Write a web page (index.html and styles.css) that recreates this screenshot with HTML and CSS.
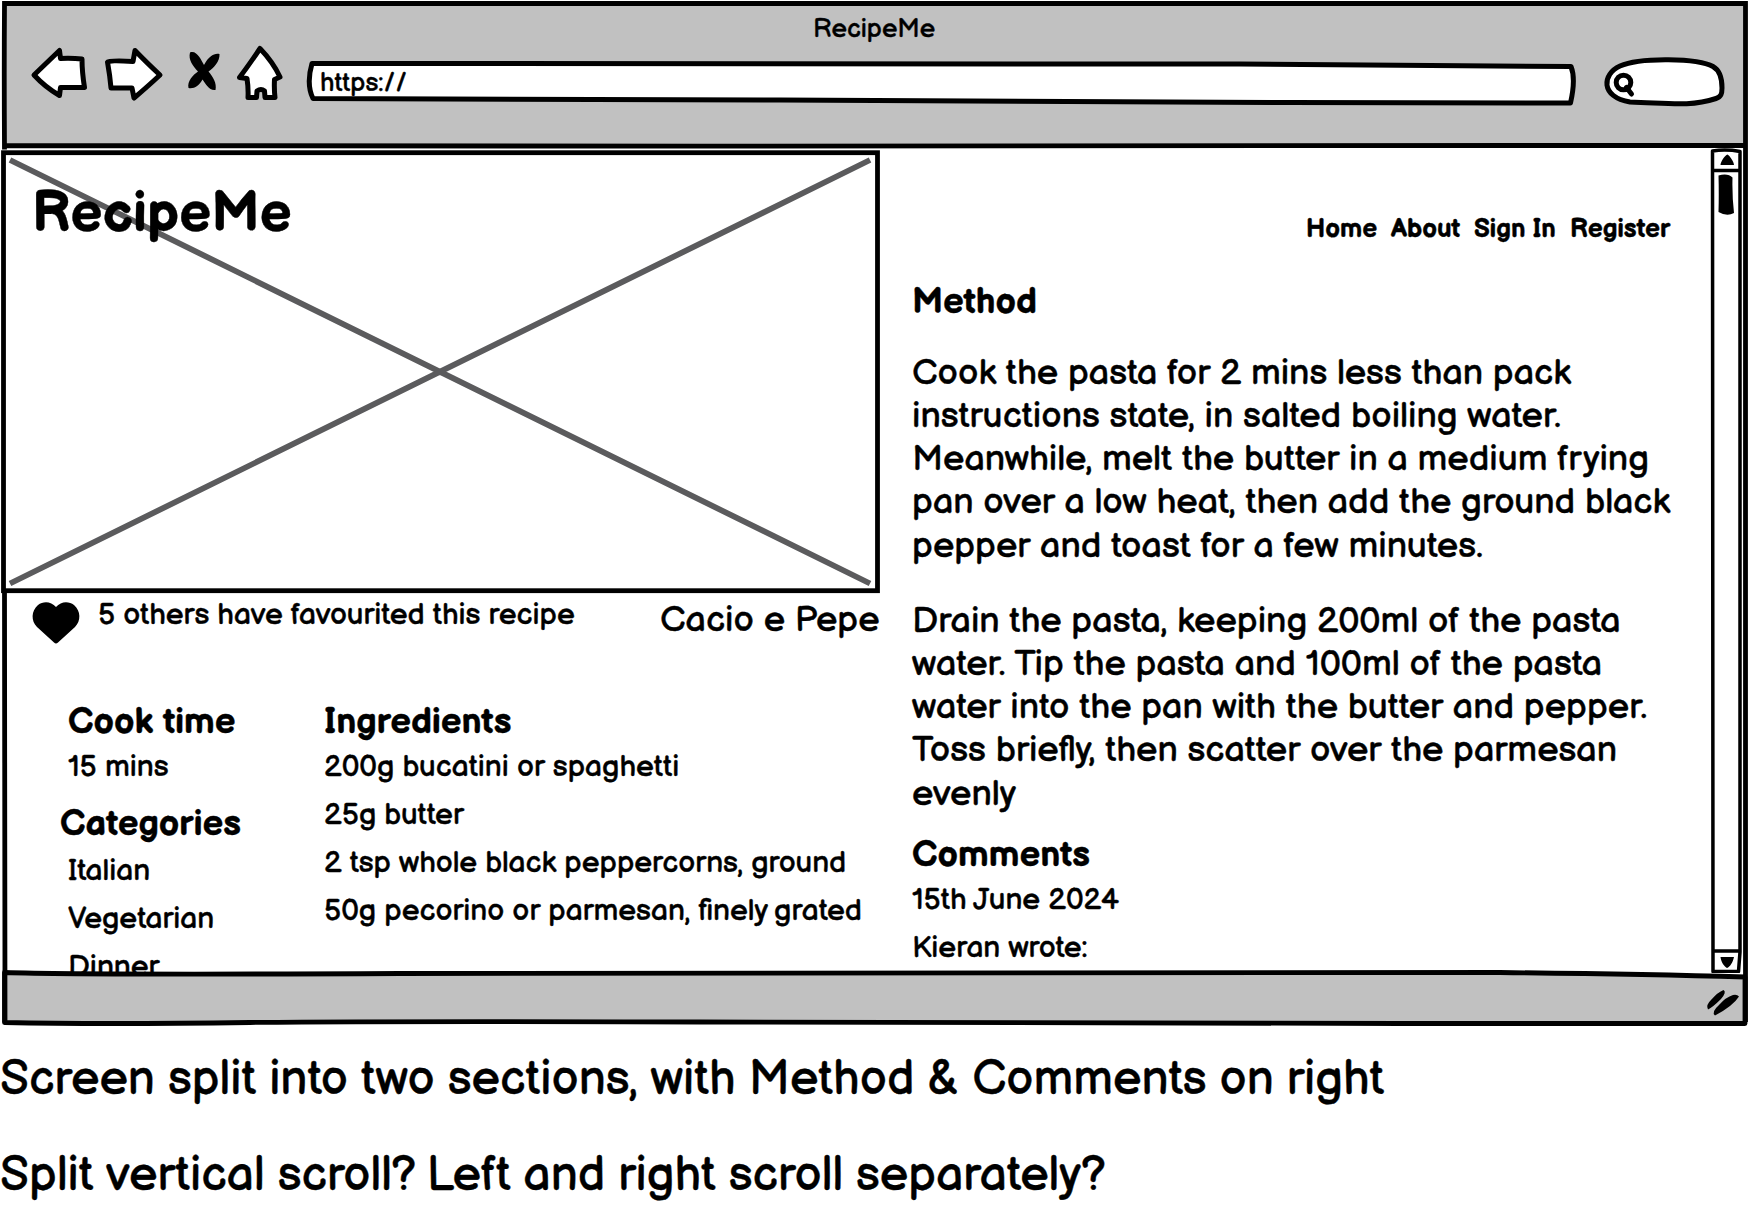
FILE: index.html
```html
<!DOCTYPE html>
<html lang="en">
<head>
<meta charset="utf-8">
<title>RecipeMe</title>
<link rel="stylesheet" href="styles.css">
</head>
<body>
<div class="browser">
  <header class="chrome">
    <div class="window-title">RecipeMe</div>
    <div class="toolbar">
      <svg class="icon back" viewBox="30 44 58 60"><path d="M34 75 59.500 50.500 60.500 58.500Q72 58 82 59Q82 72 84.500 87.500L60.500 87.500 59.500 95.500Q45 87 34 75Z"/></svg>
      <svg class="icon forward" viewBox="106 44 60 60"><path d="M108.500 62Q109.500 60 134 61.500L136 50.500Q147 62 161 75Q147 88 135 98L133 88 112 88Q111 76 108.500 62Z"/></svg>
      <svg class="icon stop" viewBox="186 44 36 60"><path class="solid" d="M190 52.500C197 50 201 60 204 65C209 56 214 53 219.500 54C220 61 214 68 208.500 71.500C213 77 217 83 215.500 90C209 91 206 84 202.500 79.500C199 86 194 89 188.500 88C187 81 193 75 198 71.500C193 66 188 60 190 52.500Z"/></svg>
      <svg class="icon home" viewBox="235 44 50 60"><path d="M260 48.500Q273 62 280 77L274.500 79.500Q274 89 275 97.500L265 97.500 264.500 91Q261 88 257 91L256.500 97.500 248 97.500Q248.500 88 247 78.500L239.500 77.500Q249 65 260 48.500Z"/></svg>
      <div class="address">
        <svg class="icon" viewBox="306 44 1270 60"><path d="M312 63.500L1240 64 1571 66.500Q1576 79 1570.500 103L1290 102.500 780 100 313 98.500Q306 84 312 63.500Z"/></svg>
        <span class="address-text">https://</span>
      </div>
      <svg class="icon search" viewBox="1602 44 124 64"><path d="M1630 102C1600 97 1602 74 1620 66C1640 57 1698 58 1713 66.500C1721 71 1722 80 1722 88C1722 94 1721 97 1716 98.500C1690 107 1668 103 1630 102Z"/><circle cx="1623.500" cy="82.500" r="7.300"/><path d="M1626.500 87.500 1631.500 94"/></svg>
    </div>
  </header>

  <main class="page">
    <section class="left">
      <div class="hero">
        <svg class="cross" viewBox="0 0 879 442"><rect x="2.500" y="1.700" width="874" height="438"/><path class="diag" d="M9 9 869 432.500M869 9 9 432.500"/></svg>
        <h1 class="logo">RecipeMe</h1>
      </div>
      <div class="meta">
        <svg class="heart" viewBox="0 0 48 42"><path d="M24 5C29-1 37-1 42 3C49 9 49 19 43 25L26 40.500Q24 42.500 22 40.500L5 25C-1 19-1 9 6 3C11-1 19-1 24 5Z"/></svg>
        <span class="favourites">5 others have favourited this recipe</span>
        <h2 class="dish">Cacio e Pepe</h2>
      </div>
      <div class="details">
        <div class="facts">
          <h3>Cook time</h3>
          <p>15 mins</p>
          <h3 class="categories">Categories</h3>
          <ul>
            <li>Italian</li>
            <li>Vegetarian</li>
            <li>Dinner</li>
          </ul>
        </div>
        <div class="ingredients">
          <h3>Ingredients</h3>
          <ul>
            <li>200g bucatini or spaghetti</li>
            <li>25g butter</li>
            <li>2 tsp whole black peppercorns, ground</li>
            <li>50g pecorino or parmesan, finely grated</li>
          </ul>
        </div>
      </div>
    </section>

    <section class="right">
      <nav>
        <a class="n-home">Home</a><a class="n-about">About</a><a class="n-sign">Sign In</a><a>Register</a>
      </nav>
      <h3 class="method-title">Method</h3>
      <div class="method">
        <p>Cook the pasta for 2 mins less than pack<br>instructions state, in salted boiling water.<br>Meanwhile, melt the butter in a medium frying<br>pan over a low heat, then add the ground black<br>pepper and toast for a few minutes.</p>
        <p>Drain the pasta, keeping 200ml of the pasta<br>water. Tip the pasta and 100ml of the pasta<br>water into the pan with the butter and pepper.<br>Toss briefly, then scatter over the parmesan<br>evenly</p>
      </div>
      <h3 class="comments-title">Comments</h3>
      <div class="comment">
        <p>15th June 2024</p>
        <p>Kieran wrote:</p>
      </div>
    </section>

    <svg class="scrollbar" viewBox="1709 147 34 828"><path d="M1712.500 151Q1726 149 1740 151.500Q1739 600 1740 952L1738.500 971.500 1713 971.500Q1712 500 1712.500 151ZM1712.500 170.500H1740M1712.500 951H1739"/><path class="solid" d="M1727.500 154.500C1730 156 1734 162 1734 165H1720.500C1720.500 162 1725 155 1727.500 154.500ZM1720.500 957H1734C1733 962 1730 967 1727 968C1724 966 1721 962 1720.500 957ZM1718.500 175.500Q1728 173 1732.500 177.500Q1732 196 1734 213Q1727 217 1718.500 212Q1719 194 1718.500 175.500Z"/></svg>
  </main>

  <svg class="status" viewBox="0 968 1750 62"><path class="bar" d="M4.500 972.500Q80 975 400 973.500L1500 972.500Q1640 974 1745 977L1745 1023.500 1400 1023.500 700 1022Q400 1021 250 1022.500Q100 1024.500 4.500 1022.500Z"/><path class="solid" d="M1723.500 990Q1727 992 1721 999Q1713 1007 1708 1009.500Q1705.500 1005 1711 1000Q1718 992 1723.500 990ZM1733 995Q1737 994 1739 996.500Q1733 1006 1715 1015.500Q1711 1012 1719 1005Q1726 997 1733 995Z"/></svg>

  <svg class="frame" viewBox="0 0 1750 1030"><path d="M4.500 149.500Q4 70 4.500 3.500H1745.500V1022M4.500 593Q4 760 5 1022M4.500 145.500 700 146.200 1745 145.300"/></svg>
</div>

<div class="notes">
  <p>Screen split into two sections, with Method &amp; Comments on right</p>
  <p>Split vertical scroll? Left and right scroll separately?</p>
</div>
</body>
</html>
```

FILE: styles.css
```css
* { box-sizing: border-box; margin: 0; padding: 0; }

body {
  width: 1750px;
  height: 1208px;
  overflow: hidden;
  background: #fff;
  color: #000;
  font-family: "Balsamiq Sans", Inter, sans-serif;
  font-feature-settings: "cv11", "cv08";
  -webkit-text-stroke: 0.4px #000;
  white-space: nowrap;
}

ul { list-style: none; }
svg { display: block; overflow: visible; }

.browser { position: relative; height: 1028px; }

.frame { position: absolute; inset: 0; width: 1750px; height: 1030px; fill: none; stroke: #000; stroke-width: 4.8; pointer-events: none; }

/* Browser chrome */
.chrome { height: 147px; margin: 0 4px; padding-top: 13px; background: linear-gradient(#fff 2px, #c1c1c1 2px, #c1c1c1 146px, #fff 146px); }
.window-title { height: 31px; line-height: 34px; font-size: 26px; padding-left: 809px; }

.toolbar { display: flex; height: 60px; padding-left: 26px; }
.icon { height: 60px; fill: #fff; stroke: #000; stroke-width: 5; stroke-linejoin: round; stroke-linecap: round; }
.solid { fill: #000; stroke: none; }
.back { width: 58px; margin-right: 17px; }
.forward { width: 60px; margin-right: 21px; }
.stop { width: 36px; margin-right: 13px; }
.home { width: 50px; margin-right: 21px; }
.address { display: grid; width: 1270px; margin-right: 26px; }
.address > * { grid-area: 1 / 1; }
.address .icon { width: 1270px; }
.address-text { height: 60px; padding-left: 14px; font-size: 26px; line-height: 79px; }
.search { width: 124px; height: 64px; }

/* Page area */
.page { display: flex; height: 826px; overflow: hidden; }
.left { width: 880px; padding: 4px 0 0 1px; }
.hero { display: grid; width: 879px; height: 442px; }
.hero > * { grid-area: 1 / 1; }
.cross { width: 879px; height: 442px; fill: none; stroke: #000; stroke-width: 4.8; }
.diag { stroke: #5b5b5d; stroke-width: 5.8; }
.logo { padding: 34px 0 0 31px; font-size: 56px; line-height: 60px; }

.meta { display: flex; height: 104px; padding-left: 31px; }
.heart { width: 48px; height: 42px; margin-top: 8.5px; }
.favourites { width: 580px; padding-left: 18px; font-size: 30px; line-height: 44px; }
.dish { font-size: 36px; line-height: 55px; font-weight: 400; }

.details { display: grid; grid-template-columns: 264px 1fr; padding: 4px 0 0 59px; font-size: 30px; line-height: 48px; }
.facts { padding-left: 8px; }
h3 { margin-bottom: -2px; font-size: 36px; line-height: 44px; }
.categories { margin: 12px 0 0 -8px; }

.right { width: 828px; padding: 66px 0 0 32px; }
nav { display: flex; padding-left: 394px; font-size: 26px; line-height: 34px; font-weight: 700; }
.n-home { width: 85px; }
.n-about { width: 83px; }
.n-sign { width: 96px; }
.method-title { margin: 33.5px 0 27.3px; }
.method { font-size: 36px; line-height: 43.2px; }
.method p + p { margin-top: 32px; }
.comments-title { margin: 18px 0 -2px; }
.comment { font-size: 30px; line-height: 48px; }

.scrollbar { flex: none; width: 34px; height: 828px; margin-left: 1px; fill: #fff; stroke: #000; stroke-width: 3.5; stroke-linejoin: round; }

.status { position: relative; width: 1750px; height: 62px; margin-top: -5px; }
.bar { fill: #c1c1c1; stroke: #000; stroke-width: 4.8; stroke-linejoin: round; }

/* Annotations under the mockup */
.notes { display: grid; gap: 36px; padding-top: 21.5px; font-size: 48px; line-height: 60px; }
```
